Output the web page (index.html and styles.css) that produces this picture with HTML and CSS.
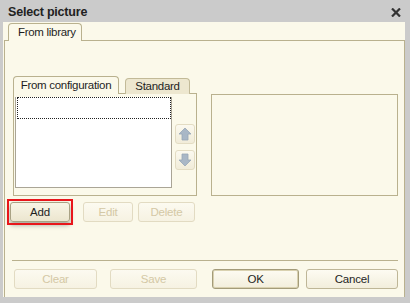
FILE: index.html
```html
<!DOCTYPE html>
<html>
<head>
<meta charset="utf-8">
<link rel="stylesheet" href="styles.css">
</head>
<body>
<div class="window">
  <div class="titlebar">
    <span class="title">Select picture</span>
    <svg class="close" width="10" height="9" viewBox="0 0 10 9"><path d="M1 0.5 L9 8.5 M9 0.5 L1 8.5" stroke="#333" stroke-width="2.2" fill="none"/></svg>
  </div>
  <div class="content">
    <div class="tabstrip">
      <div class="tab active">From library</div>
    </div>
    <div class="panel">
      <div class="row1">
        <div class="group">
          <div class="itabs">
            <div class="itab active">From configuration</div>
            <div class="itab">Standard</div>
          </div>
          <div class="ipanel">
            <div class="list"><div class="focusrow"></div></div>
            <div class="arrows">
              <div class="abtn">
                <svg width="14" height="14" viewBox="0 0 14 14"><path d="M7 1 L13 7 L10 7 L10 13 L4 13 L4 7 L1 7 Z" fill="#a9b7c6" stroke="#97a6b6" stroke-width="0.8"/></svg>
              </div>
              <div class="abtn">
                <svg width="14" height="14" viewBox="0 0 14 14"><path d="M7 13 L13 7 L10 7 L10 1 L4 1 L4 7 L1 7 Z" fill="#a9b7c6" stroke="#97a6b6" stroke-width="0.8"/></svg>
              </div>
            </div>
          </div>
        </div>
        <div class="preview"></div>
      </div>
      <div class="row2">
        <div class="btn add">Add</div>
        <div class="btn dis edit">Edit</div>
        <div class="btn dis del">Delete</div>
      </div>
      <div class="sep"></div>
      <div class="row3">
        <div class="btn dis clear">Clear</div>
        <div class="btn dis save">Save</div>
        <div class="btn def ok">OK</div>
        <div class="btn cancel">Cancel</div>
      </div>
    </div>
  </div>
</div>
</body>
</html>
```
FILE: styles.css
```css
* { box-sizing: border-box; }
html, body { margin: 0; padding: 0; }
body {
  font-family: "Liberation Sans", Arial, sans-serif;
  font-size: 11.5px;
  color: #1e1e1e;
  background: #cbcbcb;
}
.window {
  width: 410px;
  height: 303px;
  background: #cbcbcb;
  display: flex;
  flex-direction: column;
}
.titlebar {
  height: 22px;
  display: flex;
  align-items: center;
  justify-content: space-between;
  padding: 0 9px 0 8px;
}
.title {
  font-weight: bold;
  font-size: 12.5px;
  color: #222;
  padding-top: 1px;
  letter-spacing: -0.2px;
}
.close { margin-top: 3px; }
.content {
  flex: 1;
  margin: 0 5px 6px 3px;
  background: #fbf9ea;
  display: flex;
  flex-direction: column;
}
.tabstrip {
  height: 18px;
  display: flex;
  align-items: flex-end;
  padding-left: 5px;
}
.tab {
  height: 18px;
  width: 74px;
  border: 1px solid #b9b18e;
  border-bottom: none;
  border-radius: 4px 4px 0 0;
  background: #fbf9ea;
  padding: 2px 0 0 9px;
  margin-bottom: -1px;
  position: relative;
  z-index: 1;
  letter-spacing: -0.3px;
}
.panel {
  flex: 1;
  margin-left: 1px;
  border: 1px solid #b9b18e;
  border-bottom: none;
  padding: 34px 6px 0 8px;
  display: flex;
  flex-direction: column;
}
.row1 {
  display: flex;
  height: 121px;
}
.group {
  width: 184px;
  display: flex;
  flex-direction: column;
}
.itabs {
  height: 18px;
  display: flex;
  align-items: flex-end;
  gap: 6px;
}
.itab {
  height: 16px;
  border: 1px solid #c2ba98;
  border-bottom: none;
  border-radius: 4px 4px 0 0;
  background: #ede7cf;
  padding: 1px 0 0 0;
  text-align: center;
  width: 65px;
  margin-bottom: -1px;
  position: relative;
  z-index: 1;
  letter-spacing: -0.3px;
}
.itab.active {
  width: 106px;
  height: 18px;
  background: #fbf9ea;
  padding-top: 2px;
  border-color: #b9b18e;
}
.ipanel {
  height: 103px;
  border: 1px solid #b9b18e;
  display: flex;
  padding: 3px 0 0 1px;
}
.list {
  width: 157px;
  height: 91px;
  background: #fff;
  border: 1px solid #aaa596;
  border-top: none;
}
.focusrow {
  height: 22px;
  border: 1px dotted #222;
  margin: 0 0 0 1px;
  width: 154px;
}
.arrows {
  margin-left: 3px;
  padding-top: 27px;
  display: flex;
  flex-direction: column;
  gap: 6px;
}
.abtn {
  width: 20px;
  height: 20px;
  border: 1px solid #e3dcc3;
  border-radius: 3px;
  background: linear-gradient(#fbf9ef, #f1ecd9);
  display: flex;
  align-items: center;
  justify-content: center;
}
.preview {
  margin-left: 14px;
  margin-top: 19px;
  width: 187px;
  height: 102px;
  border: 1px solid #b9b18e;
}
.row2 {
  display: flex;
  margin-top: 6px;
  height: 20px;
}
.btn {
  height: 20px;
  border: 1px solid #beb697;
  border-radius: 3px;
  background: linear-gradient(#fdfbf2, #f2eedc);
  display: flex;
  align-items: center;
  justify-content: center;
  color: #1e1e1e;
  letter-spacing: -0.2px;
}
.btn.dis {
  color: #d4c8a5;
  border-color: #e2dbc2;
  background: linear-gradient(#fcfaf0, #f6f2e2);
}
.add {
  width: 60px;
  margin-left: -3px;
  position: relative;
  box-shadow: 0 3px 5px rgba(0,0,0,0.35);
  background: linear-gradient(#f8f5e6, #ece6cf);
  border-color: #a9a284;
}
.add::after {
  content: "";
  position: absolute;
  left: -4px;
  top: -4px;
  right: -4px;
  bottom: -4px;
  border: 2px solid #e8161b;
}
.edit { width: 50px; margin-left: 13px; }
.del { width: 57px; margin-left: 5px; }
.sep {
  margin-top: 38px;
  height: 1px;
  background: #b9b18e;
  margin-left: -1px;
}
.row3 {
  display: flex;
  margin-top: 8px;
  height: 20px;
}
.clear { width: 83px; margin-left: 1px; }
.save { width: 87px; margin-left: 13px; }
.ok {
  width: 87px;
  margin-left: 15px;
  border-color: #a39b79;
  box-shadow: inset 0 0 0 1px #d9d1b0;
}
.cancel { width: 92px; margin-left: 7px; }
```
